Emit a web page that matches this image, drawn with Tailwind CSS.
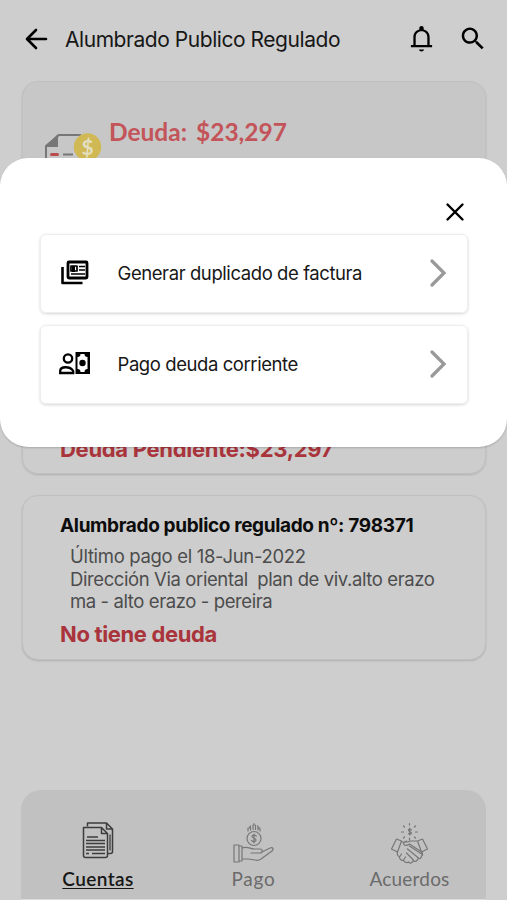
<!DOCTYPE html>
<html lang="es">
<head>
  <meta charset="UTF-8" />
  <meta name="viewport" content="width=device-width, initial-scale=1.0"/>
  <title>Alumbrado Publico Regulado</title>
  <script src="https://cdn.jsdelivr.net/npm/@tailwindcss/browser@4"></script>
</head>
<body class="bg-[#cecece] font-['Inter',sans-serif] text-[#171717]">
  <div class="relative w-full h-[900px] overflow-hidden flex flex-col whitespace-nowrap">
    <header class="h-[81px] shrink-0 flex items-start pt-[23px] pl-5 pr-[19px]">
      <svg class="size-8 shrink-0" viewBox="0 0 32 32" fill="none" stroke="#000" stroke-width="2.6" stroke-linecap="round" stroke-linejoin="round"><path d="M26 16H8M16 7l-9 9 9 9"/></svg>
      <h1 class="ml-[13px] pt-px leading-8 text-[21px] tracking-[-0.45px]">Alumbrado Publico Regulado</h1>
      <div class="ml-auto flex gap-[21px]">
        <svg class="size-[31px]" viewBox="0 0 24 24"><path d="M12 22c1.100 0 2-.7 2-1.500h-4c0 .8.9 1.500 2 1.500zm6.300-5v-6c0-3-1.800-5.300-4.600-6V4c0-1-.7-1.700-1.700-1.700s-1.700.7-1.700 1.700v1c-2.800.7-4.600 3-4.600 6v6H3.800v1.700h16.400V17zM7.500 17v-6c0-2.700 1.800-4.600 4.500-4.600s4.500 1.900 4.500 4.600v6z"/></svg>
        <svg class="size-[30px]" viewBox="0 0 24 24"><path transform="translate(0 .6)" d="M15.500 14h-.79l-.28-.27C15.410 12.590 16 11.110 16 9.500 16 5.910 13.090 3 9.500 3S3 5.910 3 9.500 5.910 16 9.500 16c1.610 0 3.090-.59 4.230-1.570l.27.28v.79l5 4.990L20.490 19l-4.990-5zm-6 0C7.010 14 5 11.990 5 9.500S7.010 5 9.500 5 14 7.010 14 9.500 11.990 14 9.500 14z"/></svg>
      </div>
    </header>

    <main class="pl-[22px] pr-[21px]">
      <section class="h-[393px] rounded-2xl border border-[#c0c0c0] bg-linear-to-b from-[#c7c7c7] from-20% to-[#cdcdcd] to-90% shadow-[0_1px_2px_rgba(0,0,0,0.15)] flex flex-col justify-between">
        <div class="flex pl-[21px] pt-[34px]">
          <svg class="mt-[14px] w-[60px] h-[60px] shrink-0" viewBox="0 0 60 60" fill="none">
            <path d="M2 58V16L15 5h22" stroke="#777" stroke-width="2"/>
            <path d="M1 17L14 4v13z" fill="#777"/>
            <path d="M7.500 24.500h6" stroke="#b94b51" stroke-width="3" stroke-linecap="round"/>
            <path d="M19 24.500h10" stroke="#777" stroke-width="2"/>
            <circle cx="43.500" cy="17" r="13.700" fill="#d0b855"/>
            <text x="43.500" y="24.500" text-anchor="middle" font-family="Lato" font-size="21" font-weight="700" fill="#e3dfc3">$</text>
          </svg>
          <h2 class="ml-[5px] text-[24.500px] leading-8 font-bold font-['Lato',sans-serif] text-[#c35459] tracking-[0px] [word-spacing:3px]">Deuda: $23,297</h2>
        </div>
        <p class="pl-[37px] pb-[8px] text-[22px] leading-8 font-bold text-[#a9343b] tracking-[-0.3px]">Deuda Pendiente:$23,297</p>
      </section>

      <section class="mt-[21px] h-[165px] rounded-2xl border border-[#c0c0c0] bg-[#cdcdcd] shadow-[0_1px_2px_rgba(0,0,0,0.15)] pl-[37px] pt-[17px]">
        <h2 class="text-[19px] leading-[26px] font-bold text-[#0c0c0c] tracking-[-0.35px]">Alumbrado publico regulado nº: 798371</h2>
        <div class="pl-[10px] pt-[6px] text-[18.500px] leading-[22.500px] text-[#4c4c4c] tracking-[-0.4px]">
          <p class="tracking-[-0.320px]">Último pago el 18-Jun-2022</p>
          <p>Dirección Via oriental&nbsp; plan de viv.alto erazo</p>
          <p>ma - alto erazo - pereira</p>
        </div>
        <p class="pt-[5px] text-[22px] leading-8 font-bold text-[#a9343b] tracking-[-0.350px]">No tiene deuda</p>
      </section>
    </main>

    <nav class="mt-auto mx-[21px] h-[110px] shrink-0 rounded-t-[20px] bg-[#c1c1c1] border-b border-[#dcdcdc] grid grid-cols-3 font-['Lato',sans-serif] text-[19px] text-[#6b6b6b]">
      <a class="flex flex-col items-center pt-7 pr-px text-[#171717]">
        <svg class="w-10 h-[47px]" viewBox="0 0 40 46" fill="none" stroke="#3d3d3d" stroke-width="1.500" stroke-linejoin="round">
          <path d="M9.500 8V4.500h19l6 6v22.500q0 2-2 2H29M28.500 4.500v6h6"/>
          <path d="M5.500 9h18l6 6v22q0 2-2 2h-20q-2 0-2-2zM23.500 9v6h6"/>
          <path d="M9 18.500h11M8 22h19M8 25h19M8 28.500h19M8 31.500h19M8 35h3M14 35h13M32 16v16" stroke-width="1.300"/>
        </svg>
        <span class="leading-7 underline underline-offset-2 font-semibold tracking-[0.4px]">Cuentas</span>
      </a>
      <a class="flex flex-col items-center pt-7">
        <svg class="w-[50px] h-[47px]" viewBox="1 0 50 47" fill="none" stroke="#777" stroke-width="1.200" stroke-linejoin="round" stroke-linecap="round">
          <path d="M20 13v-3M22.500 12V8M25 11.500V7M27.500 11.500V7M30 12V8M32 13v-3M26 7V5.500M21 10l1.500-2M31 10l-1.500-2"/>
          <circle cx="26" cy="20.500" r="7"/>
          <path d="M28.500 18q-2.500-1.500-4-.5c-2 2 3.500 2.500 3.500 4.500 0 2-3 2-4.500.5M26 16v9"/>
          <path d="M6 27h5v17H6zM11 28h3v15h-3zM14 30c6-2 8 1 12 1h6c3 0 3 4 0 4h-9M34 34l8-4c3-1 4 1 2 3L33 41q-3 2-6 1l-7-1h-6"/>
        </svg>
        <span class="leading-7 tracking-[0.7px]">Pago</span>
      </a>
      <a class="flex flex-col items-center pt-7 pl-0.5">
        <svg class="w-[44px] h-[47px]" viewBox="0.500 -1 44 47" fill="none" stroke="#777" stroke-width="1.200" stroke-linejoin="round" stroke-linecap="round">
          <path d="M22 4.500v1.500M16 7l1 1M28 7l-1 1M14 13h2M28 13h2M16 19l1-1M28 19l-1-1M22 19v2"/>
          <path d="M24 11q-3-2-3 0c0 2 3 1.500 3 3.500q-1 1.500-3 0M22.300 9v7"/>
          <path d="M9 20l5 2-4 11-6-3zM35 20l-5 2 4 11 6-3zM14 23h6l3-1h7M19 22l-3 2c0 3 3 3 6 1l12 8"/>
          <path d="M10 33q-1 3 2 5c0 3 3 4 4 3 1 3 4 3 5 2 2 2 4 1 4-1 3 1 5 0 5-2 3 0 4-1 4-3 2-1 1-3 0-4M22 27l12 8M20 30l11 9M19 34l7 7M12 38l2-3M16 41l2-3"/>
        </svg>
        <span class="leading-7 tracking-[0.2px]">Acuerdos</span>
      </a>
    </nav>

    <div class="absolute inset-x-0 top-[158px] h-[289px] rounded-[28px] bg-white shadow-[0_1px_2px_rgba(0,0,0,0.18)] px-10 pt-[42px] flex flex-col">
      <button class="self-end size-6">
        <svg class="size-6" viewBox="0 0 24 24" fill="none" stroke="#000" stroke-width="2.400" stroke-linecap="round"><path d="M4.500 4.500l15 15M19.500 4.500l-15 15"/></svg>
      </button>
      <div class="mt-[10px] flex flex-col gap-3 text-[18.500px] tracking-[-0.420px]">
        <div class="h-[79px] -mr-[1px] rounded-md border border-[#eee] shadow-[0_1px_3px_rgba(0,0,0,0.17)] flex items-center pl-[19px] pr-[19px]">
          <svg class="size-8" viewBox="0 0 32 32" fill="none" stroke="#000" stroke-linejoin="round">
            <rect x="8" y="4" width="19" height="16" rx="1" stroke-width="2.800"/>
            <path d="M2.500 9v16h20" stroke-width="2.600"/>
            <path d="M11 8h6v5h-6zM19 8.500h6M19 12h6M11 16h14" stroke-width="1.700"/>
            <path d="M12 8h3v6h-3z" fill="#000" stroke="none"/>
          </svg>
          <span class="ml-[25.500px]">Generar duplicado de factura</span>
          <svg class="ml-auto -mt-0.5 w-5 h-8" viewBox="0 0 20 32" fill="none" stroke="#999" stroke-width="3.300" stroke-linecap="round"><path d="M4 4l12 12L4 28"/></svg>
        </div>
        <div class="h-[79px] -mr-[1px] rounded-md border border-[#eee] shadow-[0_1px_3px_rgba(0,0,0,0.17)] flex items-center pl-[17px] pr-[19px]">
          <svg class="-mt-0.5 w-[34px] h-8" viewBox="0 0 34 32" fill="none" stroke="#000" stroke-width="2.300">
            <circle cx="10" cy="10.500" r="4.200"/>
            <path d="M2.200 25v-2c0-5 10-5 13 0v2z"/>
            <path d="M17.500 4H32v22H17.500z" fill="#000" stroke="none"/>
            <path d="M22.500 6h4q0 3 3 3v12q-3 0-3 3h-4q0-3-3-3V9q3 0 3-3z" fill="#fff" stroke="none"/>
            <circle cx="24.500" cy="15" r="3.200" fill="#000" stroke="none"/>
          </svg>
          <span class="ml-[25.500px]">Pago deuda corriente</span>
          <svg class="ml-auto -mt-0.5 w-5 h-8" viewBox="0 0 20 32" fill="none" stroke="#999" stroke-width="3.300" stroke-linecap="round"><path d="M4 4l12 12L4 28"/></svg>
        </div>
      </div>
    </div>
  </div>
</body>
</html>
